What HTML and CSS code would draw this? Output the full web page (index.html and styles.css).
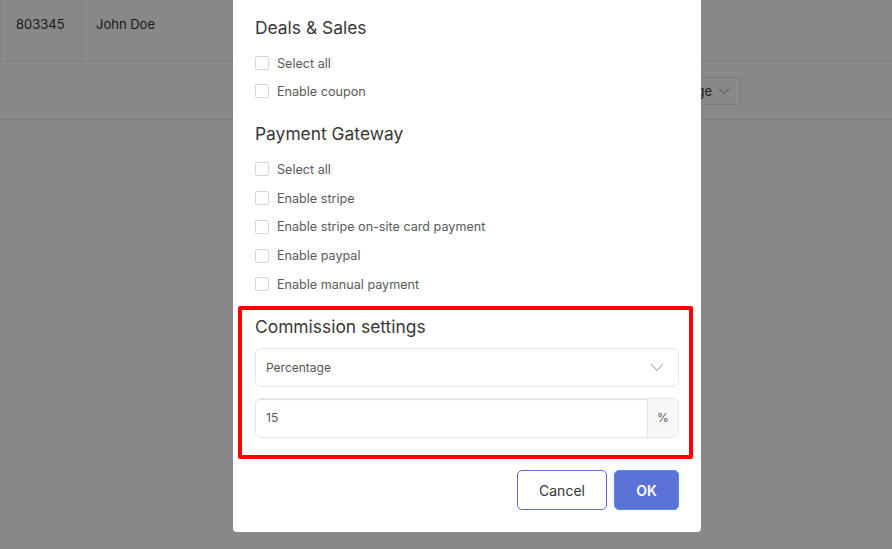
FILE: index.html
```html
<!DOCTYPE html>
<html>
<head>
<meta charset="utf-8">
<link rel="stylesheet" href="styles.css">
</head>
<body>
<div class="page">
  <div class="table">
    <div class="row">
      <div class="cell id">803345</div>
      <div class="cell name">John Doe</div>
    </div>
    <div class="pager">
      <div class="pager-select">Percentage
        <svg width="12" height="8" viewBox="0 0 12 8"><path d="M1 1.5 L6 6.5 L11 1.5" fill="none" stroke="#999" stroke-width="1"/></svg>
      </div>
    </div>
  </div>
</div>
<div class="overlay"></div>
<div class="modal">
  <div class="section">
    <h3 class="heading">Deals &amp; Sales</h3>
    <div class="checks">
      <label class="check"><span class="box"></span>Select all</label>
      <label class="check"><span class="box"></span>Enable coupon</label>
    </div>
  </div>
  <div class="section">
    <h3 class="heading">Payment Gateway</h3>
    <div class="checks gap2">
      <label class="check"><span class="box"></span>Select all</label>
      <label class="check"><span class="box"></span>Enable stripe</label>
      <label class="check"><span class="box"></span>Enable stripe on-site card payment</label>
      <label class="check"><span class="box"></span>Enable paypal</label>
      <label class="check"><span class="box"></span>Enable manual payment</label>
    </div>
  </div>
  <div class="section commission">
    <h3 class="heading">Commission settings</h3>
    <div class="select">
      <span>Percentage</span>
      <svg width="14" height="9" viewBox="0 0 14 9"><path d="M1 1 L7 7.5 L13 1" fill="none" stroke="#bdbdbd" stroke-width="1.2"/></svg>
    </div>
    <div class="input-group">
      <span class="input">15</span>
      <span class="addon">%</span>
    </div>
  </div>
  <div class="footer">
    <button class="btn cancel">Cancel</button>
    <button class="btn ok">OK</button>
  </div>
  <div class="highlight"></div>
</div>
</body>
</html>
```

FILE: styles.css
```css
* { box-sizing: border-box; }
html, body { margin: 0; padding: 0; }
body {
  width: 892px;
  height: 549px;
  overflow: hidden;
  position: relative;
  font-family: "Inter", "Noto Sans", sans-serif;
  background: #ffffff;
}
.page { width: 892px; height: 549px; background: #fff; }
.table { width: 892px; }
.row {
  display: flex;
  height: 62px;
  border-bottom: 1px solid #ececec;
  border-left: 1px solid #ececec;
}
.cell {
  font-size: 13px;
  color: #333;
  padding: 16px 15px 0 15px;
}
.cell.id { width: 81px; border-right: 1px solid #ececec; }
.cell.name { padding-left: 14px; }
.pager {
  height: 58px;
  border-bottom: 1px solid #ececec;
  display: flex;
  justify-content: flex-end;
  align-items: center;
  padding-right: 151px;
}
.pager-select {
  width: 110px;
  height: 28px;
  border: 1px solid #e3e3e3;
  border-radius: 3px;
  font-size: 13px;
  color: #444;
  display: flex;
  align-items: center;
  justify-content: flex-end;
  gap: 6px;
  padding-right: 10px;
}
.overlay {
  position: absolute;
  inset: 0;
  background: rgba(0, 0, 0, 0.467);
}
.modal {
  position: absolute;
  left: 233px;
  top: 0;
  width: 468px;
  height: 532px;
  background: #fff;
  border-radius: 0 0 4px 4px;
  padding: 16px 22px 22px 22px;
  display: flex;
  flex-direction: column;
}
.section { display: flex; flex-direction: column; }
.section + .section { margin-top: 17px; }
.section.commission { margin-top: 16px; }
.heading {
  margin: 0;
  font-size: 17.4px;
  font-weight: 400;
  line-height: 24px;
  color: #383838;
}
.checks { display: flex; flex-direction: column; margin-top: 9px; }
.checks.gap2 { margin-top: 9px; }
.check {
  display: flex;
  align-items: center;
  height: 28px;
  font-size: 12.6px;
  color: #5a5a5a;
}
.checks.gap2 .check { height: 28.75px; }
.box {
  width: 14px;
  height: 14px;
  border: 1px solid #d6d6d6;
  border-radius: 2px;
  margin-right: 8px;
  background: #fff;
}
.commission .select { margin-top: 9px; }
.select {
  height: 39px;
  border: 1px solid #e6e6e6;
  border-radius: 6px;
  display: flex;
  align-items: center;
  justify-content: space-between;
  padding: 0 14px 0 10px;
  font-size: 12px;
  color: #555;
}
.input-group {
  margin-top: 11px;
  height: 40px;
  border: 1px solid #e6e6e6;
  border-radius: 6px;
  display: flex;
  overflow: hidden;
}
.input {
  flex: 1;
  display: flex;
  align-items: center;
  padding-left: 10px;
  font-size: 12px;
  color: #555;
  box-shadow: inset 0 2px 1px -1px #e2e2e2;
}
.addon {
  width: 31px;
  border-left: 1px solid #e6e6e6;
  background: #f7f7f7;
  display: flex;
  align-items: center;
  justify-content: center;
  font-size: 12px;
  color: #555;
}
.footer {
  margin-top: auto;
  display: flex;
  justify-content: flex-end;
  gap: 7px;
}
.btn {
  height: 40px;
  border-radius: 5px;
  font-family: inherit;
  font-size: 14px;
  cursor: pointer;
}
.cancel {
  width: 90px;
  background: #fff;
  border: 1px solid #5b6fd6;
  color: #333;
}
.ok {
  width: 65px;
  background: #5a72d6;
  border: 1px solid #4d8bf0;
  color: #fff;
  font-weight: 600;
}
.highlight {
  position: absolute;
  left: 5px;
  top: 306px;
  width: 455px;
  height: 153px;
  border: 4px solid #ff0000;
  border-radius: 2px;
  pointer-events: none;
}
```
